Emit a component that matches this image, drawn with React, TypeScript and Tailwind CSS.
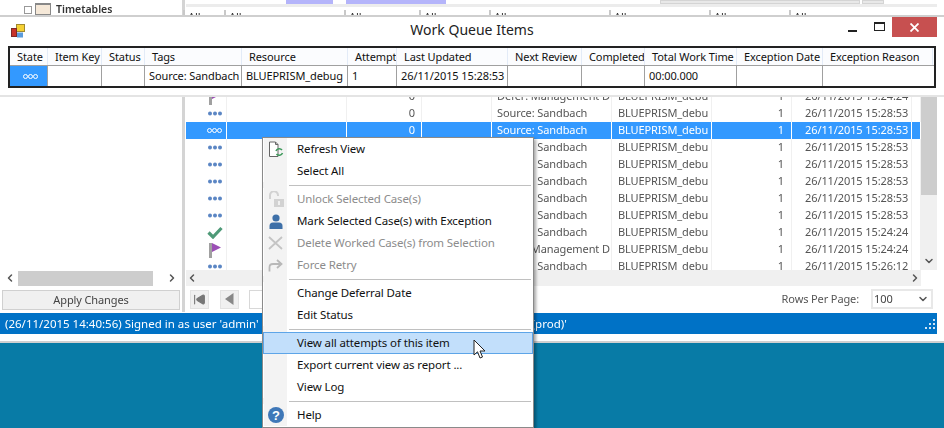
import React from "react";
import { ChevronDown, ChevronLeft, ChevronRight, SkipBack } from "lucide-react";

const font = "font-['Noto_Sans','Open_Sans',sans-serif]";

/* ─── Small drawings ─── */
const Dots = ({ selected }: { selected?: boolean }) =>
  selected ? (
    <svg width="15" height="7" viewBox="0 0 15 7" fill="none" stroke="white" strokeWidth="1">
      <circle cx="2.5" cy="3.5" r="2" />
      <circle cx="7.5" cy="3.5" r="2" />
      <circle cx="12.5" cy="3.5" r="2" />
    </svg>
  ) : (
    <svg width="14" height="5" viewBox="0 0 14 5" fill="#5b86c4">
      <circle cx="2" cy="2.5" r="2" />
      <circle cx="7" cy="2.5" r="2" />
      <circle cx="12" cy="2.5" r="2" />
    </svg>
  );

const Check = () => (
  <svg width="16" height="13" viewBox="0 0 16 13" fill="none" className="-mr-px">
    <path d="M1.5 6.5 L6 11 L14.5 2" stroke="#4f9a78" strokeWidth="3.2" />
  </svg>
);

const Flag = () => (
  <svg width="14" height="16" viewBox="0 0 14 16">
    <rect x="1" y="1" width="3" height="15" fill="#a0a0a0" />
    <path d="M4 1 L13 5.5 L4 10 Z" fill="#9b4fb5" />
  </svg>
);

const RefreshIcon = () => (
  <svg width="16" height="17" viewBox="0 0 16 17" fill="none">
    <path d="M1.5 1 H7.5 L10 3.5 V15.5 H1.5 Z" fill="white" stroke="#666" />
    <path d="M7.5 1 V3.5 H10" stroke="#666" />
    <path d="M8 10 A3.5 3.5 0 0 1 14 9" stroke="#3f9a5c" strokeWidth="1.6" />
    <path d="M14.5 12 A3.5 3.5 0 0 1 8.5 13" stroke="#3f9a5c" strokeWidth="1.6" />
  </svg>
);

const LockIcon = () => (
  <svg width="16" height="17" viewBox="0 0 16 17" fill="none">
    <path d="M2 8 V4.5 A4 4 0 0 1 10 4 V5" stroke="#d2d2d2" strokeWidth="2" />
    <rect x="6" y="8" width="10" height="8" fill="#d2d2d2" />
    <rect x="10" y="10" width="2" height="4" fill="#f0f0f0" />
  </svg>
);

const UserIcon = () => (
  <svg width="14" height="15" viewBox="0 0 14 15" fill="#3e70a8">
    <circle cx="7" cy="4" r="3.6" />
    <path d="M0.5 15 V12 Q0.5 8.5 4 8.5 H10 Q13.5 8.5 13.5 12 V15 Z" />
  </svg>
);

const CrossIcon = () => (
  <svg width="15" height="14" viewBox="0 0 15 14" fill="none" stroke="#c4c4c4" strokeWidth="1.8">
    <path d="M1 1 L14 13 M14 1 L1 13" />
  </svg>
);

const RetryIcon = () => (
  <svg width="15" height="13" viewBox="0 0 15 13" fill="none" stroke="#b8b8b8" strokeWidth="1.8">
    <path d="M1.5 12.5 V8.5 Q1.5 5 5 5 H13" />
    <path d="M9 1 L13.5 5 L9 9" />
  </svg>
);

const HelpIcon = () => (
  <svg width="16" height="16" viewBox="0 0 16 16">
    <circle cx="8" cy="8" r="8" fill="#3f78b8" />
    <text x="8" y="12.5" textAnchor="middle" fontSize="13" fontWeight="700" fill="white" fontFamily="Liberation Sans">?</text>
  </svg>
);

const AppIcon = () => (
  <svg width="14" height="14" viewBox="0 0 14 14">
    <rect x="5.5" y="0.5" width="8" height="7" fill="#f5d033" stroke="#a08a30" />
    <rect x="0.5" y="4.5" width="5" height="8" fill="#c7322a" stroke="#7a2a2a" />
    <rect x="6" y="8.5" width="6" height="5" fill="#5b9bdc" />
  </svg>
);

const Cursor = () => (
  <svg width="14" height="21" viewBox="0 0 14 21">
    <path d="M1 1 V16 L4.5 12.8 L7 19 L9.5 18 L7 12 H12 Z" fill="white" stroke="#222" strokeWidth="1" />
  </svg>
);

const ResizeGrip = () => (
  <svg width="10" height="10" viewBox="0 0 10 10" fill="#cfe3f5">
    <rect x="8" y="0" width="2" height="2" />
    <rect x="4" y="4" width="2" height="2" />
    <rect x="8" y="4" width="2" height="2" />
    <rect x="0" y="8" width="2" height="2" />
    <rect x="4" y="8" width="2" height="2" />
    <rect x="8" y="8" width="2" height="2" />
  </svg>
);

/* ─── Work queue grid behind the dialog ─── */
const gridCols = "grid grid-cols-[41px_120px_75px_70px_120px_100px_80px_120px_9px]";

type QueueRow = { state: "dots" | "check" | "flag"; tag: string; date: string; selected?: boolean };

const rows: QueueRow[] = [
  { state: "flag", tag: "Defer: Management D", date: "26/11/2015 15:24:24" },
  { state: "dots", tag: "Source: Sandbach", date: "26/11/2015 15:28:53" },
  { state: "dots", tag: "Source: Sandbach", date: "26/11/2015 15:28:53", selected: true },
  { state: "dots", tag: "Source: Sandbach", date: "26/11/2015 15:28:53" },
  { state: "dots", tag: "Source: Sandbach", date: "26/11/2015 15:28:53" },
  { state: "dots", tag: "Source: Sandbach", date: "26/11/2015 15:28:53" },
  { state: "dots", tag: "Source: Sandbach", date: "26/11/2015 15:28:53" },
  { state: "dots", tag: "Source: Sandbach", date: "26/11/2015 15:28:53" },
  { state: "check", tag: "Source: Sandbach", date: "26/11/2015 15:24:24" },
  { state: "flag", tag: "Defer: Management D", date: "26/11/2015 15:24:24" },
  { state: "dots", tag: "Source: Sandbach", date: "26/11/2015 15:26:12" },
];

const GridRow = ({ row }: { row: QueueRow }) => {
  const cell = row.selected
    ? "border-r border-white h-[17px] flex items-center overflow-hidden whitespace-nowrap"
    : "border-r border-[#f0f0f0] h-[17px] flex items-center overflow-hidden whitespace-nowrap";
  return (
    <div className={`${gridCols} shrink-0 text-[11px] tracking-[-0.1px] ${row.selected ? "bg-[#3399ff] text-white" : "text-[#555]"}`}>
      <div className={`${cell} justify-end pr-[4px]`}>
        {row.state === "dots" && <Dots selected={row.selected} />}
        {row.state === "check" && <Check />}
        {row.state === "flag" && <Flag />}
      </div>
      <div className={cell} />
      <div className={`${cell} justify-end pr-[6px]`}>0</div>
      <div className={cell} />
      <div className={`${cell} pl-[5px]`}>{row.tag}</div>
      <div className={`${cell} pl-[6px]`}>BLUEPRISM_debu</div>
      <div className={`${cell} justify-end pr-[7px]`}>1</div>
      <div className={`${cell} pl-[13px]`}>{row.date}</div>
      <div className={cell} />
    </div>
  );
};

const FilterCell = () => (
  <div className="flex gap-[3px] h-[9px] overflow-hidden border-l-2 border-[#c8c8c8] pl-[3px] text-[11px] leading-[14px] text-[#333]">
    All
  </div>
);

/* ─── Dialog on top ─── */
const dialogCols =
  "grid grid-cols-[38px_54px_43px_97px_106px_49px_111px_74px_63px_92px_86px_110px]";

const headers = [
  "State",
  "Item Key",
  "Status",
  "Tags",
  "Resource",
  "Attempt",
  "Last Updated",
  "Next Review",
  "Completed",
  "Total Work Time",
  "Exception Date",
  "Exception Reason",
];

const values: Record<number, string> = {
  3: "Source: Sandbach",
  4: "BLUEPRISM_debug",
  5: "1",
  6: "26/11/2015 15:28:53",
  9: "00:00.000",
};

const WorkQueueDialog = () => (
  <div className="absolute left-0 top-[15px] w-[944px] h-[80px] bg-white border-t-2 border-[#cfcfcf] shadow-[0_2px_0_#e4e4e4]">
    <div className="flex items-center h-[29px] relative">
      <div className="absolute left-[11px] top-[7px]">
        <AppIcon />
      </div>
      <div className="w-full text-center text-[14px] text-[#222] pb-[4px]">Work Queue Items</div>
      <div className="absolute left-[848px] top-[13px] w-[9px] h-[2px] bg-[#222]" />
      <div className="absolute left-[874px] top-[5px] w-[11px] h-[9px] border border-t-2 border-[#222]" />
      <div className="absolute left-[892px] top-0 w-[45px] h-[20px] bg-[#c75050] flex items-center justify-center text-white">
        <svg width="9" height="9" viewBox="0 0 9 9" stroke="white" strokeWidth="1.8">
          <path d="M0.5 0.5 L8.5 8.5 M8.5 0.5 L0.5 8.5" />
        </svg>
      </div>
    </div>
    <div className="ml-[8px] w-[928px] border-2 border-[#222] text-[11px] tracking-[-0.1px] text-[#111]">
      <div className={`${dialogCols} h-[18px] bg-[#fbfcfe] border-b border-[#a0a0a0]`}>
        {headers.map((h) => (
          <div key={h} className="border-r border-[#e3ebf7] pl-[7px] whitespace-nowrap overflow-hidden leading-[17px]">
            {h}
          </div>
        ))}
      </div>
      <div className={`${dialogCols} h-[20px]`}>
        {headers.map((h, i) => (
          <div
            key={h}
            className={`border-r border-[#a0a0a0] last:border-r-0 pl-[4px] whitespace-nowrap overflow-hidden leading-[20px] ${
              i === 0 ? "bg-[#3399ff] flex items-center justify-center" : ""
            }`}
          >
            {i === 0 ? <Dots selected /> : values[i]}
          </div>
        ))}
      </div>
    </div>
  </div>
);

/* ─── Context menu ─── */
type MenuEntry =
  | { sep: true }
  | { label: string; icon?: React.ReactNode; disabled?: boolean; active?: boolean };

const menu: MenuEntry[] = [
  { label: "Refresh View", icon: <RefreshIcon /> },
  { label: "Select All" },
  { sep: true },
  { label: "Unlock Selected Case(s)", icon: <LockIcon />, disabled: true },
  { label: "Mark Selected Case(s) with Exception", icon: <UserIcon /> },
  { label: "Delete Worked Case(s) from Selection", icon: <CrossIcon />, disabled: true },
  { label: "Force Retry", icon: <RetryIcon />, disabled: true },
  { sep: true },
  { label: "Change Deferral Date" },
  { label: "Edit Status" },
  { sep: true },
  { label: "View all attempts of this item", active: true },
  { label: "Export current view as report ..." },
  { label: "View Log" },
  { sep: true },
  { label: "Help", icon: <HelpIcon /> },
];

const ContextMenu = () => (
  <div className="absolute left-[262px] top-[137px] w-[272px] h-[291px] bg-white border border-[#8a8a8a] shadow-[2px_2px_3px_rgba(0,0,0,0.35)] text-[11.5px] tracking-[-0.12px] text-[#111] flex flex-col">
    {menu.map((m, i) =>
      "sep" in m ? (
        <div key={i} className="h-[6px] flex items-center shrink-0">
          <div className="w-[24px] h-full bg-[#f3f3f3]" />
          <div className="flex-1 h-px bg-[#c0c0c0] mx-[2px]" />
        </div>
      ) : (
        <div
          key={i}
          className={`h-[22px] shrink-0 flex items-center border ${
            m.active ? "bg-[#c2dffb] border-[#5da5e8]" : "border-transparent"
          } ${m.disabled ? "text-[#8c8c8c]" : ""}`}
        >
          <div className={`w-[23px] h-[22px] flex items-center justify-center shrink-0 ${m.active ? "" : "bg-[#f3f3f3]"}`}>
            {m.icon}
          </div>
          <div className="pl-[10px] whitespace-nowrap">{m.label}</div>
        </div>
      ),
    )}
  </div>
);

const PagerButton = ({ children }: { children: React.ReactNode }) => (
  <div className="w-[19px] h-[19px] bg-[#f0f0f0] border border-[#e2e2e2] flex items-center justify-center">{children}</div>
);

export default function App() {
  return (
    <div className={`relative w-[944px] h-[428px] overflow-hidden bg-[#087ba6] ${font}`}>
      <div className="h-[343px] bg-white border-b-2 border-[#d0d0d0] flex flex-col blur-[0.5px]">
        <div className="flex h-[312px]">
          {/* left panel */}
          <div className="w-[182px] shrink-0 flex flex-col">
            <div className="flex-1 flex items-start gap-[3px] pl-[24px] pt-[3px]">
              <div className="w-[8px] h-[8px] border border-[#999] mt-[3px]" />
              <div className="w-[16px] h-[12px] border border-[#888] border-t-2 bg-[#f5e8d8]" />
              <div className="ml-[2px] text-[10.5px] font-semibold text-[#333] leading-[12px]">Timetables</div>
            </div>
            <div className="h-[16px] flex items-center pl-[4px] pr-[4px] text-[#555]">
              <ChevronLeft size={12} strokeWidth={3} />
              <div className="ml-[2px] w-[135px] h-[15px] bg-[#cdcdcd]" />
              <ChevronRight size={12} strokeWidth={3} className="ml-auto" />
            </div>
            <div className="mt-[4px] mb-[2px] mx-[2px] h-[20px] bg-[#f0f0f0] border border-[#d0d0d0] flex items-center justify-center text-[11px] tracking-[-0.12px] text-[#444]">
              Apply Changes
            </div>
          </div>
          <div className="w-[3px] shrink-0 bg-[#d4d4d4]" />
          {/* right panel */}
          <div className="flex-1 flex flex-col pl-[1px] pr-[7px] min-w-0">
            <div className="h-[88px] shrink-0 flex flex-col">
              <div className="h-[4px] flex shrink-0">
                <div className="w-[100px]" />
                <div className="w-[47px] bg-[#b4b4fa]" />
                <div className="w-[13px]" />
                <div className="w-[100px] bg-[#b4b4fa]" />
                <div className="w-[214px]" />
                <div className="w-[200px] bg-[#e8e8e8] border border-[#d4d4d4]" />
                <div className="ml-[2px] w-[22px] bg-[#e8e8e8] border border-[#d4d4d4]" />
              </div>
              <div className="h-[3px] bg-[#ececec] shrink-0" />
              <div className={`${gridCols} mt-[3px] -ml-[3px]`}>
                <FilterCell />
                <FilterCell />
                <FilterCell />
                <FilterCell />
                <FilterCell />
                <FilterCell />
                <FilterCell />
                <FilterCell />
              </div>
            </div>
            <div className="flex h-[182px] overflow-hidden">
              <div className="w-[735px] shrink-0 flex flex-col">
                {rows.map((r, i) => (
                  <GridRow key={i} row={r} />
                ))}
              </div>
              <div className="flex-1 bg-[#f0f0f0] flex flex-col justify-between items-center">
                <div className="w-full h-[107px] bg-[#cdcdcd]" />
                <ChevronDown size={12} strokeWidth={3} className="text-[#555] mb-[3px]" />
              </div>
            </div>
            <div className="h-[16px] w-[735px] flex items-center justify-between bg-[#f0f0f0] text-[#555]">
              <ChevronLeft size={12} strokeWidth={3} />
              <ChevronRight size={12} strokeWidth={3} />
            </div>
            <div className="flex-1 flex items-center pl-[4px] pr-[4px]">
              <PagerButton>
                <SkipBack size={13} fill="#777" className="text-[#777]" />
              </PagerButton>
              <div className="w-[11px]" />
              <PagerButton>
                <svg width="9" height="12" viewBox="0 0 9 12" fill="#888">
                  <path d="M8.5 0 V12 L0 6 Z" />
                </svg>
              </PagerButton>
              <div className="ml-[10px] w-[20px] h-[19px] border border-[#d8d8d8]" />
              <div className="flex-1" />
              <div className="text-[11px] tracking-[-0.12px] text-[#555]">Rows Per Page:</div>
              <div className="ml-[12px] w-[62px] h-[20px] border-2 border-[#e8e8e8] flex items-center justify-between pl-px pr-[2px] text-[11px] text-[#444]">
                100
                <ChevronDown size={12} strokeWidth={3} className="text-[#555]" />
              </div>
            </div>
          </div>
        </div>
        <div className="mt-[1px] mr-[7px] h-[21px] shrink-0 bg-[#0072c6] text-white text-[11.5px] leading-[21px] pl-[5px] pr-[2px] flex items-center justify-between overflow-hidden">
          <span className="whitespace-nowrap">(26/11/2015 14:40:56) Signed in as user 'admin' using the database connection 'Blue Prism Server (prod)'</span>
          <ResizeGrip />
        </div>
      </div>
      <WorkQueueDialog />
      <ContextMenu />
      <div className="absolute left-[473px] top-[339px]">
        <Cursor />
      </div>
    </div>
  );
}
